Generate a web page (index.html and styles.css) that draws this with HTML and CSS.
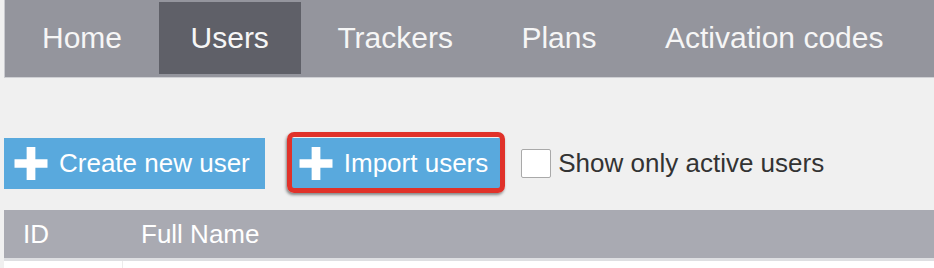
FILE: index.html
```html
<!doctype html>
<html lang="en">
  <head>
    <meta charset="UTF-8" />
    <meta name="viewport" content="width=device-width, initial-scale=1.0" />
    <title>Users</title>
    <link rel="stylesheet" href="styles.css">
  </head>
  <body>
    <div class="nav">
      <a class="nav-item" href="#">Home</a>
      <a class="nav-item active" href="#">Users</a>
      <a class="nav-item" href="#">Trackers</a>
      <a class="nav-item" href="#">Plans</a>
      <a class="nav-item" href="#">Activation codes</a>
    </div>

    <div class="toolbar">
      <button class="btn">
        <svg class="plus" viewBox="0 0 34 34" aria-hidden="true"><path d="M12.5 0h9v12.5H34v9H21.5V34h-9V21.5H0v-9h12.5z" fill="#fff"/></svg>
        Create new user
      </button>
      <button class="btn marked">
        <svg class="plus" viewBox="0 0 34 34" aria-hidden="true"><path d="M12.5 0h9v12.5H34v9H21.5V34h-9V21.5H0v-9h12.5z" fill="#fff"/></svg>
        Import users
      </button>
      <label class="filter">
        <span class="check"></span>
        Show only active users
      </label>
    </div>

    <table class="users">
      <thead>
        <tr>
          <th class="col-id">ID</th>
          <th>Full Name</th>
        </tr>
      </thead>
      <tbody>
        <tr>
          <td class="col-id"></td>
          <td></td>
        </tr>
      </tbody>
    </table>
  </body>
</html>
```

FILE: styles.css
```css
body {
  font-family: 'Liberation Sans', Arial, sans-serif;
  margin: 0 0 0 4px;
  background: #f0f0f0;
  overflow: hidden;
}
.nav {
  display: flex;
  gap: 4.5px;
  padding: 2px 0 3px 5px;
  background: #94959d;
  border-bottom: 1px solid #cfd0d4;
  border-left: 1px solid #c9cacf;
}
.nav-item {
  display: block;
  height: 72px;
  line-height: 72px;
  padding: 0 32px;
  font-size: 30px;
  color: #f6f6f6;
  text-decoration: none;
}
.nav-item.active {
  background: #5f6068;
}
.toolbar {
  display: flex;
  align-items: center;
  margin-top: 60px;
}
.btn {
  display: flex;
  align-items: center;
  gap: 11px;
  height: 51px;
  padding: 0 15px 0 10px;
  border: none;
  background: #59a9dd;
  color: #fff;
  font-family: inherit;
  font-size: 26px;
}
.plus {
  width: 34px;
  height: 33px;
}
.marked {
  position: relative;
  margin-left: 24px;
}
.marked::after {
  content: '';
  position: absolute;
  top: -6px;
  left: -2px;
  right: -2px;
  bottom: -4px;
  border: 5px solid #e0322a;
  border-radius: 7px;
  box-shadow: -1px 2px 3px rgba(0, 0, 0, 0.45);
}
.filter {
  display: flex;
  align-items: center;
  gap: 7px;
  margin-left: 18px;
  font-size: 26px;
  color: #333;
}
.check {
  width: 28px;
  height: 27px;
  background: #fff;
  border: 1px solid #a9a9a9;
  border-radius: 2px;
}
.users {
  width: 100%;
  margin-top: 21px;
  border-collapse: collapse;
}
.users th {
  height: 48px;
  padding: 0 19px;
  background: #a9aab2;
  color: #fff;
  font-size: 26px;
  font-weight: normal;
  text-align: left;
}
.users .col-id {
  width: 80px;
}
.users td {
  height: 6px;
  background: #fff;
  border-top: 3px solid #dedfe2;
}
.users td.col-id {
  border-right: 1px solid #ececec;
}
```
